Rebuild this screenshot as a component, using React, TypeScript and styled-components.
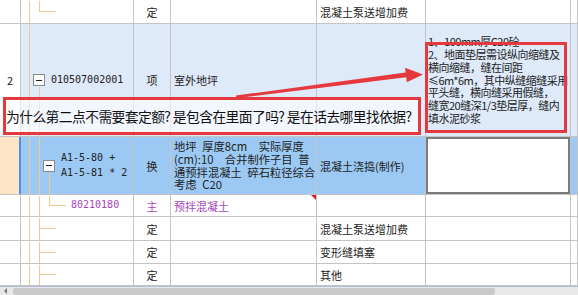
import React from "react";
import styled, { createGlobalStyle } from "styled-components";

const GlobalStyle = createGlobalStyle`
  html, body { margin: 0; padding: 0; background: #fff; overflow: hidden; }
  body { font-family: "Noto Sans CJK SC", "Liberation Sans", sans-serif; }
`;

const LINE = "#c4c4c4";
const GUIDE = "#f2c98c";
const RED = "#e6393e";
const MONO = `"DejaVu Sans Mono", "Liberation Mono", monospace`;

const Page = styled.div`
  position: relative;
  width: 578px;
  height: 295px;
  overflow: hidden;
  display: flex;
  flex-direction: column;
`;

const Row = styled.div<{ $h: number; $bg?: string }>`
  display: flex;
  flex: none;
  box-sizing: border-box;
  height: ${(p) => p.$h}px;
  background: ${(p) => p.$bg || "#fff"};
  border-bottom: 1px solid ${LINE};
`;

const Cell = styled.div<{ $w?: number; $bg?: string }>`
  box-sizing: border-box;
  position: relative;
  display: flex;
  align-items: center;
  width: ${(p) => (p.$w ? `${p.$w}px` : "auto")};
  flex: ${(p) => (p.$w ? "none" : "1")};
  border-right: 1px solid ${LINE};
  background: ${(p) => p.$bg || "transparent"};
  font-size: 11px;
  color: #222;
  white-space: nowrap;
  overflow: hidden;
`;

const IndexCell = styled(Cell)<{ $active?: boolean }>`
  justify-content: center;
  background: ${(p) => (p.$active ? "#fde4c6" : "#fff")};
  border-right: ${(p) => (p.$active ? "2px solid #4f8fd8" : `1px solid ${LINE}`)};
`;

const TreeCell = styled(Cell)<{ $indent: number }>`
  padding-left: ${(p) => p.$indent}px;
`;

const TypeCell = styled(Cell)<{ $tone?: string }>`
  justify-content: center;
  color: ${(p) => p.$tone || "#222"};
`;

const TextCell = styled(Cell)<{ $tone?: string; $flag?: boolean }>`
  padding-left: 3px;
  color: ${(p) => p.$tone || "#222"};
  &::after {
    content: "";
    display: ${(p) => (p.$flag ? "block" : "none")};
    position: absolute;
    top: 0;
    right: 0;
    border-top: 5px solid #e02020;
    border-left: 5px solid transparent;
  }
`;

const NoteCell = styled(Cell)`
  padding-left: 2px;
`;

const EditCell = styled(Cell)`
  background: #fff;
  box-shadow: inset 0 0 0 2px #7b7b7b;
`;

const Lines = styled.div<{ $size: number; $track?: number }>`
  font-size: ${(p) => p.$size}px;
  letter-spacing: ${(p) => p.$track || 0}px;
  line-height: 12.8px;
  white-space: pre;
  position: relative;
`;

const Guides = styled.svg`
  position: absolute;
  left: 0;
  top: 0;
  pointer-events: none;
`;

const Toggle = styled.span`
  box-sizing: border-box;
  width: 12px;
  height: 12px;
  flex: none;
  border: 1px solid #8a8a8a;
  background: #fff;
  display: flex;
  align-items: center;
  justify-content: center;
  position: relative;
  margin-right: 6px;
  &::before {
    content: "";
    width: 6px;
    height: 1px;
    background: #222;
  }
`;

const Code = styled.span<{ $tone?: string }>`
  position: relative;
  color: ${(p) => p.$tone || "#222"};
  font-family: ${MONO};
  font-size: 10px;
  line-height: 14.5px;
  white-space: pre;
`;

const Scrollbar = styled.div`
  flex: none;
  box-sizing: border-box;
  height: 9px;
  border-top: 1px solid #a9c1de;
  background: #e8e8e8;
  display: flex;
  align-items: center;
  padding-left: 4px;
  gap: 6px;
`;

const ScrollArrow = styled.span`
  width: 0;
  height: 0;
  border-top: 3px solid transparent;
  border-bottom: 3px solid transparent;
  border-right: 3px solid #777;
`;

const ScrollThumb = styled.div`
  width: 482px;
  height: 7px;
  border-radius: 3px;
  background: #c9c9c9;
`;

const QuestionBox = styled.div`
  position: absolute;
  left: 3px;
  top: 97px;
  width: 418px;
  height: 38px;
  box-sizing: border-box;
  border: 3px solid ${RED};
  background: rgba(255, 255, 255, 0.6);
  display: flex;
  align-items: center;
  font-size: 13.8px;
  letter-spacing: -0.6px;
  color: #111;
  white-space: nowrap;
  overflow: hidden;
`;

const NoteFrame = styled.div`
  position: absolute;
  left: 425px;
  top: 42px;
  width: 142px;
  height: 91px;
  box-sizing: border-box;
  border: 3px solid ${RED};
`;

const Arrow = styled.svg`
  position: absolute;
  left: 0;
  top: 0;
  pointer-events: none;
`;

const W = [21, 113, 37, 146, 109, 145];

type Seg = [number, number, number, number];

const TreeGuides = ({ h, segs }: { h: number; segs: Seg[] }) => (
  <Guides width={113} height={h} shapeRendering="crispEdges">
    {segs.map(([x1, y1, x2, y2], i) => (
      <line key={i} x1={x1 + 0.5} y1={y1 + 0.5} x2={x2 + 0.5} y2={y2 + 0.5} stroke={GUIDE} strokeWidth={1} />
    ))}
  </Guides>
);

const PlainRow = ({ h, elbow, name }: { h: number; elbow: number; name: string }) => (
  <Row $h={h}>
    <IndexCell $w={W[0]} />
    <TreeCell $w={W[1]} $indent={0}>
      <TreeGuides h={h} segs={[[8, 0, 8, h], [18, 0, 18, h], [18, elbow, 34, elbow]]} />
    </TreeCell>
    <TypeCell $w={W[2]}>定</TypeCell>
    <TextCell $w={W[3]} />
    <TextCell $w={W[4]}>{name}</TextCell>
    <Cell $w={W[5]} />
    <Cell />
  </Row>
);

// en spaces stand in for the half-width blanks of the original grid font
const note = [
  "1、100mm厚C20砼",
  "2、地面垫层需设纵向缩缝及",
  "横向缩缝，缝在间距",
  "≤6m*6m，其中纵缝缩缝采用",
  "平头缝，横向缝采用假缝，",
  "缝宽20缝深1/3垫层厚，缝内",
  "填水泥砂浆",
].join("\n");

const desc = [
  "地坪\u2002厚度8cm\u2002\u2002实际厚度",
  "(cm):10\u2002\u2002合并制作子目\u2002普",
  "通预拌混凝土\u2002碎石粒径综合",
  "考虑\u2002C20",
].join("\n");

export default function App() {
  return (
    <Page>
      <GlobalStyle />
      <Row $h={24}>
        <IndexCell $w={W[0]} />
        <TreeCell $w={W[1]} $indent={0}>
          <TreeGuides h={24} segs={[[8, 0, 8, 24], [18, 0, 18, 11], [18, 11, 34, 11]]} />
        </TreeCell>
        <TypeCell $w={W[2]}>定</TypeCell>
        <TextCell $w={W[3]} />
        <TextCell $w={W[4]}>混凝土泵送增加费</TextCell>
        <Cell $w={W[5]} />
        <Cell />
      </Row>

      <Row $h={113} $bg="#dee9f9">
        <IndexCell $w={W[0]}>2</IndexCell>
        <TreeCell $w={W[1]} $indent={12}>
          <TreeGuides h={113} segs={[[8, 0, 8, 113], [18, 62, 18, 113]]} />
          <Toggle />
          <Code>010507002001</Code>
        </TreeCell>
        <TypeCell $w={W[2]}>项</TypeCell>
        <TextCell $w={W[3]}>室外地坪</TextCell>
        <TextCell $w={W[4]} />
        <NoteCell $w={W[5]}>
          <Lines $size={11} $track={-0.5}>{note}</Lines>
        </NoteCell>
        <Cell />
      </Row>

      <Row $h={58} $bg="#9bc9f3">
        <IndexCell $w={W[0]} $active />
        <TreeCell $w={W[1]} $indent={22}>
          <TreeGuides h={58} segs={[[8, 0, 8, 58], [18, 0, 18, 58], [28, 35, 28, 58]]} />
          <Toggle />
          <Code>{"A1-5-80 +\nA1-5-81 * 2"}</Code>
        </TreeCell>
        <TypeCell $w={W[2]}>换</TypeCell>
        <TextCell $w={W[3]}>
          <Lines $size={11.3}>{desc}</Lines>
        </TextCell>
        <TextCell $w={W[4]}>混凝土浇捣(制作)</TextCell>
        <EditCell $w={W[5]} />
        <Cell />
      </Row>

      <Row $h={22}>
        <IndexCell $w={W[0]} />
        <TreeCell $w={W[1]} $indent={50}>
          <TreeGuides h={22} segs={[[8, 0, 8, 22], [18, 0, 18, 22], [28, 0, 28, 10], [28, 10, 44, 10]]} />
          <Code $tone="#a447bd">80210180</Code>
        </TreeCell>
        <TypeCell $w={W[2]} $tone="#a447bd">主</TypeCell>
        <TextCell $w={W[3]} $tone="#a447bd" $flag>预拌混凝土</TextCell>
        <TextCell $w={W[4]} />
        <Cell $w={W[5]} />
        <Cell />
      </Row>

      <PlainRow h={24} elbow={11} name="混凝土泵送增加费" />
      <PlainRow h={23} elbow={11} name="变形缝填塞" />
      <PlainRow h={22} elbow={10} name="其他" />

      <Scrollbar>
        <ScrollArrow />
        <ScrollThumb />
      </Scrollbar>

      <QuestionBox>为什么第二点不需要套定额? 是包含在里面了吗? 是在话去哪里找依据?</QuestionBox>
      <NoteFrame />
      <Arrow width={578} height={295}>
        <polygon
          points="236,95.6 405.6,72.4 405,67.8 423,74.6 406.8,82.2 406.2,77.2 236,98.2"
          fill={RED}
        />
      </Arrow>
    </Page>
  );
}
